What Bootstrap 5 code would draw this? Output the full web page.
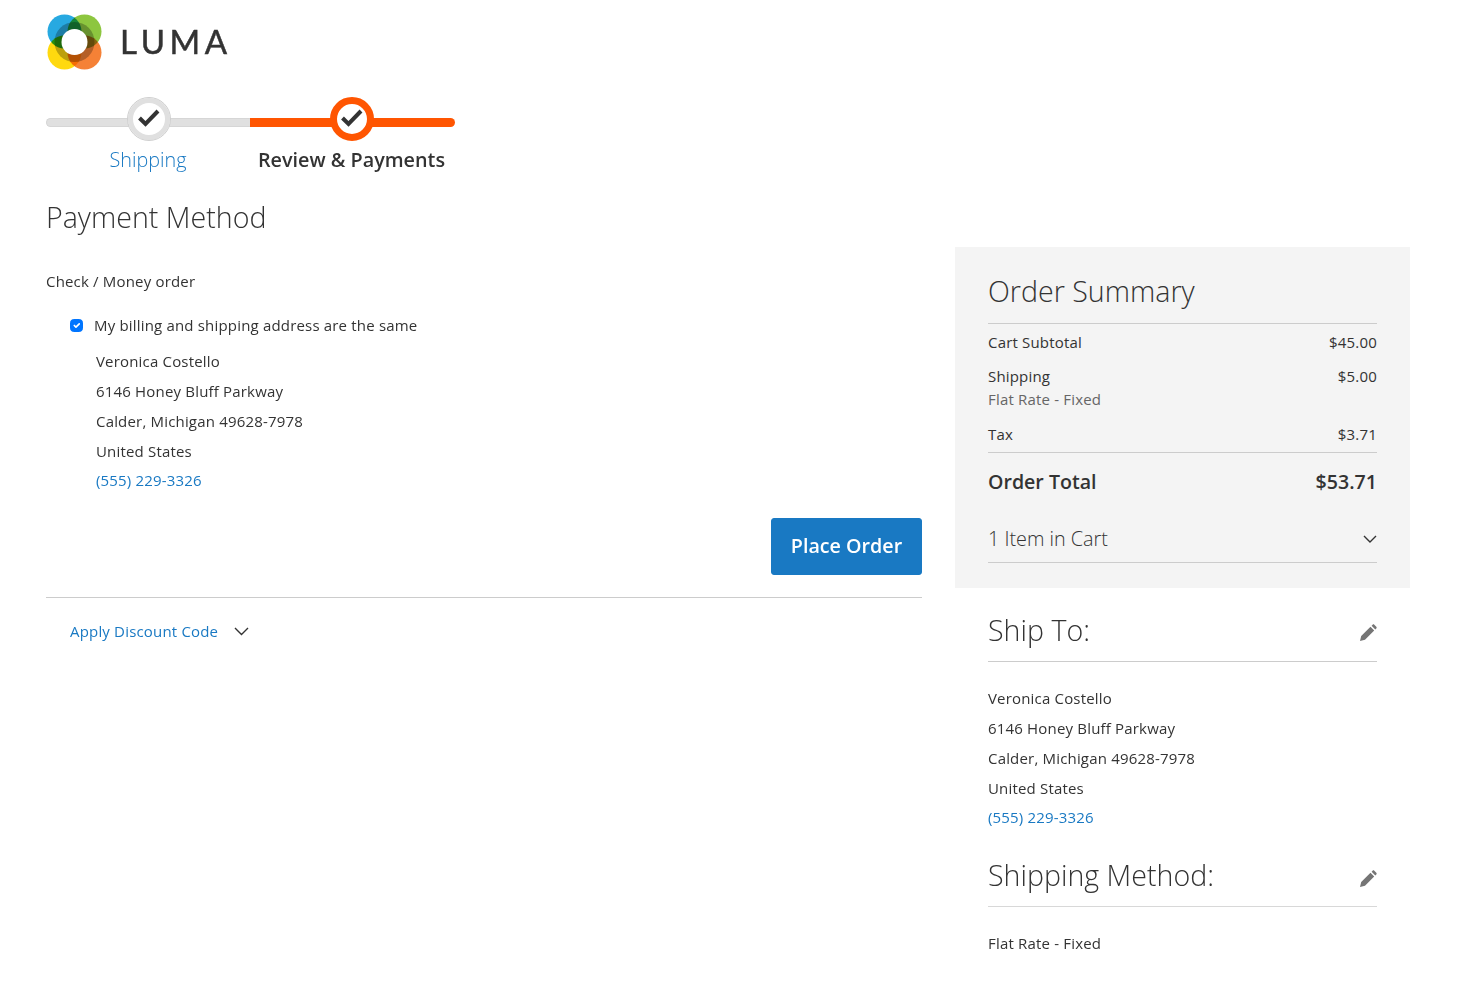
<!DOCTYPE html>
<html lang="en">
<head>
  <meta charset="UTF-8">
  <meta name="viewport" content="width=device-width, initial-scale=1.0">
  <link href="https://cdn.jsdelivr.net/npm/bootstrap@5.3.0/dist/css/bootstrap.min.css" rel="stylesheet">
  <title>Checkout</title>
  <style>
    body { font-family: "Open Sans", sans-serif; font-size: 15px; letter-spacing: .18px; color: #333; }
    a { color: #1979c3; text-decoration: none; }
    .page { padding: 0 66px 0 46px; }
    .logo { height: 84px; padding-top: 14px; }
    .logo svg circle { mix-blend-mode: multiply; }
    .logo svg .hole { mix-blend-mode: normal; }
    .logo-text { font-family: "Lato", sans-serif; font-size: 33px; font-weight: 400; letter-spacing: 4.6px; -webkit-text-stroke: .5px #333; color: #333; line-height: 54px; margin-left: 17px; }
    .steps { height: 114px; letter-spacing: 0; }
    .step { position: relative; text-align: center; }
    .step:first-child { width: 204px; }
    .step:last-child { width: 205px; }
    .step .bar { height: 9px; background: #e0e0e0; border: 1px solid #d6d6d6; margin-top: 34px; }
    .step:first-child .bar { border-radius: 5px 0 0 5px; border-right: 0; }
    .step:last-child .bar { background: #ff5501; border: 0; border-radius: 0 5px 5px 0; }
    .step .dot { position: absolute; top: 13px; width: 44px; height: 44px; border-radius: 50%; background: #fff; border: 1px solid #cfcfcf; box-shadow: inset 0 0 0 5px #e0e0e0; display: flex; align-items: center; justify-content: center; }
    .step .dot svg { margin-bottom: 2px; }
    .step:first-child .dot { left: 81px; }
    .step:last-child .dot { left: 80px; border: 7px solid #ff5501; box-shadow: none; }
    .step-label { font-size: 19.8px; line-height: 28px; margin-top: 19px; white-space: nowrap; }
    .step:first-child .step-label { font-weight: 300; color: #1979c3; }
    .step:last-child .step-label { font-weight: 600; margin-right: 2px; }
    h1.title { font-size: 28.6px; font-weight: 300; letter-spacing: 0; line-height: 38px; margin: 0; color: #333; }
    .main-col { width: 876px; }
    .side-col { width: 455px; margin-top: 49px; }
    .method { line-height: 20px; margin-top: 35px; }
    .same { margin: 24px 0 0 24px; line-height: 20px; }
    .same label { margin-left: 3px; }
    .form-check-input { width: 13px; height: 13px; margin: 0; border-radius: 2px; }
    .form-check-input:checked { background-color: #0075ff; border-color: #0075ff; }
    .address { margin: 11px 0 0 50px; }
    .address div { line-height: 30px; }
    .address a { line-height: 28px; display: block; }
    .btn-place { background: #1979c3; border: 1px solid #1979c3; color: #fff; font-size: 19.7px; font-weight: 600; letter-spacing: 0; width: 151px; height: 57px; border-radius: 3px; padding: 0 0 2px; }
    .place { margin-top: 24px; padding-bottom: 22px; border-bottom: 1px solid #ccc; }
    .discount { padding: 23px 0 0 24px; line-height: 20px; gap: 16px; }
    .summary { background: #f4f4f4; padding: 22px 33px 25px 33px; }
    .summary h2 { font-size: 28.6px; font-weight: 300; letter-spacing: 0; line-height: 44px; margin: 0 0 8px; padding-bottom: 10px; border-bottom: 1px solid #ccc; }
    .line { line-height: 20px; }
    .ship-line { margin-top: 14px; }
    .tax-line { margin-top: 12px; }
    .muted { color: #666; line-height: 26px; }
    .total { font-size: 19.6px; font-weight: 600; letter-spacing: 0; line-height: 28px; border-top: 1px solid #ccc; margin-top: 8px; padding-top: 15px; }
    .items { font-size: 19.8px; font-weight: 300; letter-spacing: 0; line-height: 28px; margin-top: 29px; padding-bottom: 9px; border-bottom: 1px solid #ccc; }
    .block { margin: 22px 33px 0 33px; }
    .block + .block { margin-top: 24px; }
    .block h2 { font-size: 28.6px; font-weight: 300; letter-spacing: 0; line-height: 40px; margin: 0; }
    .head { border-bottom: 1px solid #ccc; padding-bottom: 11px; }
    .head svg { margin-top: 5px; }
    .block + .block .head { border-bottom-color: #d8d8d8; }
    .block + .block .head svg { margin-top: 8px; }
    .block .address { margin: 21px 0 0 0; }
  </style>
</head>
<body>
  <div class="page">
    <!-- Logo -->
    <div class="logo d-flex align-items-start">
      <svg width="57" height="56" viewBox="0 0 57 56">
        <circle cx="18.5" cy="17.5" r="17" fill="#27a9e1"/>
        <circle cx="38.5" cy="17.5" r="17" fill="#8dc63f"/>
        <circle cx="18.5" cy="38.5" r="17" fill="#ffd90f"/>
        <circle cx="38.5" cy="38.5" r="17" fill="#f58136"/>
        <circle cx="28.5" cy="28" r="20" fill="#bcbcbc"/>
        <circle class="hole" cx="28.5" cy="28" r="13" fill="#fff"/>
      </svg>
      <span class="logo-text">LUMA</span>
    </div>

    <!-- Progress -->
    <div class="steps d-flex">
      <div class="step">
        <div class="bar"></div>
        <div class="dot"><svg width="24" height="20" viewBox="0 0 24 20"><path d="M2.5 10l6 6L21 3" fill="none" stroke="#333" stroke-width="4"/></svg></div>
        <div class="step-label">Shipping</div>
      </div>
      <div class="step">
        <div class="bar"></div>
        <div class="dot"><svg width="24" height="20" viewBox="0 0 24 20"><path d="M2.5 10l6 6L21 3" fill="none" stroke="#333" stroke-width="4"/></svg></div>
        <div class="step-label">Review &amp; Payments</div>
      </div>
    </div>

    <div class="d-flex justify-content-between align-items-start">
      <!-- Payment -->
      <div class="main-col">
        <h1 class="title">Payment Method</h1>
        <div class="method">Check / Money order</div>
        <div class="same d-flex align-items-center gap-2">
          <input class="form-check-input" type="checkbox" checked>
          <label>My billing and shipping address are the same</label>
        </div>
        <div class="address">
          <div>Veronica Costello</div>
          <div>6146 Honey Bluff Parkway</div>
          <div>Calder, Michigan 49628-7978</div>
          <div>United States</div>
          <a href="#">(555) 229-3326</a>
        </div>
        <div class="place d-flex justify-content-end">
          <button class="btn btn-place">Place Order</button>
        </div>
        <div class="discount d-flex align-items-center">
          <a href="#">Apply Discount Code</a>
          <svg width="15" height="9" viewBox="0 0 15 9"><path d="M1 1l6.5 6.5L14 1" fill="none" stroke="#333" stroke-width="1.4"/></svg>
        </div>
      </div>

      <!-- Sidebar -->
      <div class="side-col">
        <div class="summary">
          <h2>Order Summary</h2>
          <div class="line d-flex justify-content-between"><span>Cart Subtotal</span><span>$45.00</span></div>
          <div class="line ship-line d-flex justify-content-between"><span>Shipping</span><span>$5.00</span></div>
          <div class="muted">Flat Rate - Fixed</div>
          <div class="line tax-line d-flex justify-content-between"><span>Tax</span><span>$3.71</span></div>
          <div class="total d-flex justify-content-between"><span>Order Total</span><span>$53.71</span></div>
          <div class="items d-flex justify-content-between align-items-center">
            <span>1 Item in Cart</span>
            <svg width="14" height="9" viewBox="0 0 14 9"><path d="M1 1l6 6 6-6" fill="none" stroke="#333" stroke-width="1.4"/></svg>
          </div>
        </div>
        <div class="block">
          <div class="head d-flex justify-content-between align-items-center">
            <h2>Ship To:</h2>
            <svg width="18" height="18" viewBox="0 0 18 18"><path d="M1 17l1.2-5L11.5 2.8l3.7 3.7L6 15.8zM12.6 1.7l1-1c.5-.5 1.2-.5 1.7 0l2 2c.5.5.5 1.2 0 1.7l-1 1z" fill="#757575"/></svg>
          </div>
          <div class="address">
            <div>Veronica Costello</div>
            <div>6146 Honey Bluff Parkway</div>
            <div>Calder, Michigan 49628-7978</div>
            <div>United States</div>
            <a href="#">(555) 229-3326</a>
          </div>
        </div>
        <div class="block">
          <div class="head d-flex justify-content-between align-items-center">
            <h2>Shipping Method:</h2>
            <svg width="18" height="18" viewBox="0 0 18 18"><path d="M1 17l1.2-5L11.5 2.8l3.7 3.7L6 15.8zM12.6 1.7l1-1c.5-.5 1.2-.5 1.7 0l2 2c.5.5.5 1.2 0 1.7l-1 1z" fill="#757575"/></svg>
          </div>
          <div class="address"><div>Flat Rate - Fixed</div></div>
        </div>
      </div>
    </div>
  </div>

  <script src="https://cdn.jsdelivr.net/npm/bootstrap@5.3.0/dist/js/bootstrap.bundle.min.js"></script>
</body>
</html>
